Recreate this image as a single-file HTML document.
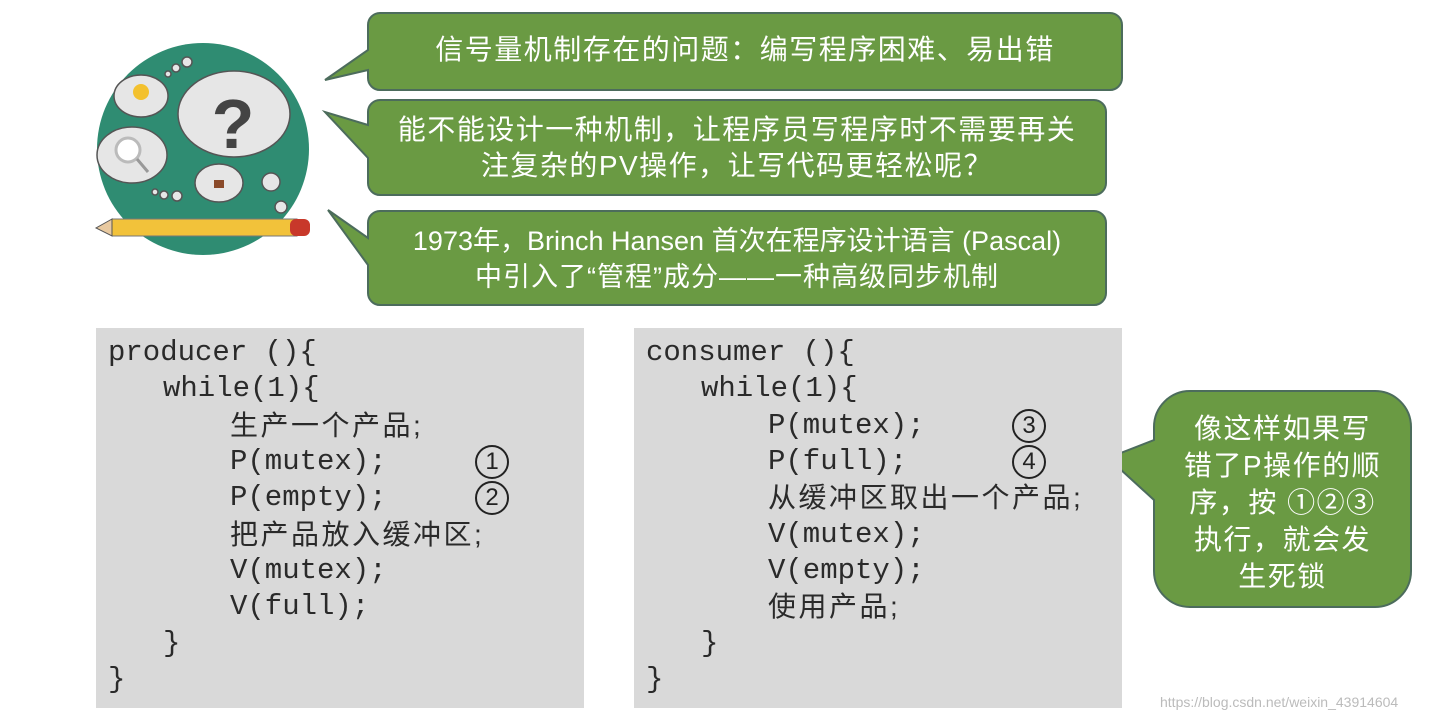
<!DOCTYPE html>
<html><head><meta charset="utf-8"><style>
body{margin:0;width:1443px;height:720px;background:#fff;position:relative;overflow:hidden;font-family:"Liberation Sans","Noto Sans CJK SC",sans-serif}
.t{position:absolute;color:#fff;font-size:28px;letter-spacing:1.5px;text-align:center;line-height:36px;white-space:nowrap}
.code{position:absolute;top:328px;width:488px;height:380px;background:#d9d9d9}
.l{position:absolute;font-family:"Liberation Mono","Noto Sans CJK SC",monospace;font-size:29px;color:#2a2a2a;white-space:nowrap;line-height:36px}
.c{font-family:"Liberation Sans","Noto Sans CJK SC",sans-serif;font-size:28px;letter-spacing:2.5px}
.n{position:absolute;width:30px;height:30px;border:2px solid #222;border-radius:50%;font:24px "Liberation Sans",sans-serif;text-align:center;line-height:30px;color:#222}
</style></head><body>
<svg width="1443" height="720" style="position:absolute;left:0;top:0">
<g fill="#6a9a43" stroke="#4c6c5c" stroke-width="2">
<path d="M380 13H1110a12 12 0 0 1 12 12V78a12 12 0 0 1-12 12H380a12 12 0 0 1-12-12V70L325 80L368 50V25a12 12 0 0 1 12-12Z"/>
<path d="M380 100H1094a12 12 0 0 1 12 12V183a12 12 0 0 1-12 12H380a12 12 0 0 1-12-12V158L325 112L368 125V112a12 12 0 0 1 12-12Z"/>
<path d="M380 211H1094a12 12 0 0 1 12 12V293a12 12 0 0 1-12 12H380a12 12 0 0 1-12-12V265L328 210L368 238V223a12 12 0 0 1 12-12Z"/>
<path d="M1190 391H1375a36 36 0 0 1 36 36V571a36 36 0 0 1-36 36H1190a36 36 0 0 1-36-36V500L1108 458L1154 440V427a36 36 0 0 1 36-36Z"/>
</g>
<circle cx="203" cy="149" r="106" fill="#2f8c72"/>
<g fill="#e6e6e6" stroke="#555" stroke-width="1.5">
<ellipse cx="141" cy="96" rx="27" ry="21"/>
<ellipse cx="234" cy="114" rx="56" ry="43"/>
<ellipse cx="132" cy="155" rx="35" ry="28"/>
<ellipse cx="219" cy="183" rx="24" ry="19"/>
<circle cx="271" cy="182" r="9"/><circle cx="281" cy="207" r="6"/>
<circle cx="187" cy="62" r="5"/><circle cx="176" cy="68" r="4"/><circle cx="168" cy="74" r="3"/>
<circle cx="155" cy="192" r="3"/><circle cx="164" cy="195" r="4"/><circle cx="177" cy="196" r="5"/>
</g>
<text x="233" y="148" font-size="70" font-weight="bold" fill="#444" text-anchor="middle" font-family="Liberation Sans">?</text>
<circle cx="141" cy="92" r="8" fill="#f3c12e"/>
<circle cx="128" cy="150" r="12" fill="#fff" stroke="#bbb" stroke-width="3"/><line x1="137" y1="159" x2="148" y2="172" stroke="#999" stroke-width="3"/>
<rect x="214" y="180" width="10" height="8" fill="#8a4a2a"/>
<rect x="112" y="219" width="185" height="17" fill="#f2c23a" stroke="#777"/>
<rect x="290" y="219" width="20" height="17" rx="6" fill="#c8382a"/>
<path d="M112 219L96 228L112 236Z" fill="#e8c9a0" stroke="#555"/>
</svg>
<div class="t" style="left:368px;top:32px;width:754px">信号量机制存在的问题：编写程序困难、易出错</div>
<div class="t" style="left:368px;top:112px;width:738px">能不能设计一种机制，让程序员写程序时不需要再关<br>注复杂的PV操作，让写代码更轻松呢？</div>
<div class="t" style="left:368px;top:223px;width:738px;font-size:27px;letter-spacing:0">1973年，Brinch Hansen 首次在程序设计语言 (Pascal)<br><span style="letter-spacing:1px">中引入了“管程”成分——一种高级同步机制</span></div>
<div class="t" style="left:1154px;top:410px;width:257px;line-height:37px">像这样如果写<br>错了P操作的顺<br>序，按 ①②③<br>执行，就会发<br>生死锁</div>
<div class="code" style="left:96px"></div>
<div class="code" style="left:634px"></div>
<div class="l" style="left:108px;top:335px">producer (){</div>
<div class="l" style="left:163px;top:371px">while(1){</div>
<div class="l" style="left:230px;top:408px"><span class="c">生产一个产品;</span></div>
<div class="l" style="left:230px;top:444px">P(mutex);</div>
<div class="l" style="left:230px;top:480px">P(empty);</div>
<div class="l" style="left:230px;top:517px"><span class="c">把产品放入缓冲区;</span></div>
<div class="l" style="left:230px;top:553px">V(mutex);</div>
<div class="l" style="left:230px;top:589px">V(full);</div>
<div class="l" style="left:163px;top:626px">}</div>
<div class="l" style="left:108px;top:662px">}</div>
<div class="n" style="left:475px;top:445px">1</div>
<div class="n" style="left:475px;top:481px">2</div>
<div class="l" style="left:646px;top:335px">consumer (){</div>
<div class="l" style="left:701px;top:371px">while(1){</div>
<div class="l" style="left:768px;top:408px">P(mutex);</div>
<div class="l" style="left:768px;top:444px">P(full);</div>
<div class="l" style="left:768px;top:480px"><span class="c">从缓冲区取出一个产品;</span></div>
<div class="l" style="left:768px;top:517px">V(mutex);</div>
<div class="l" style="left:768px;top:553px">V(empty);</div>
<div class="l" style="left:768px;top:589px"><span class="c">使用产品;</span></div>
<div class="l" style="left:701px;top:626px">}</div>
<div class="l" style="left:646px;top:662px">}</div>
<div class="n" style="left:1012px;top:409px">3</div>
<div class="n" style="left:1012px;top:445px">4</div>
<div style="position:absolute;left:1160px;top:694px;font-size:14px;color:#bbb">https://blog.csdn.net/weixin_43914604</div>
</body></html>
